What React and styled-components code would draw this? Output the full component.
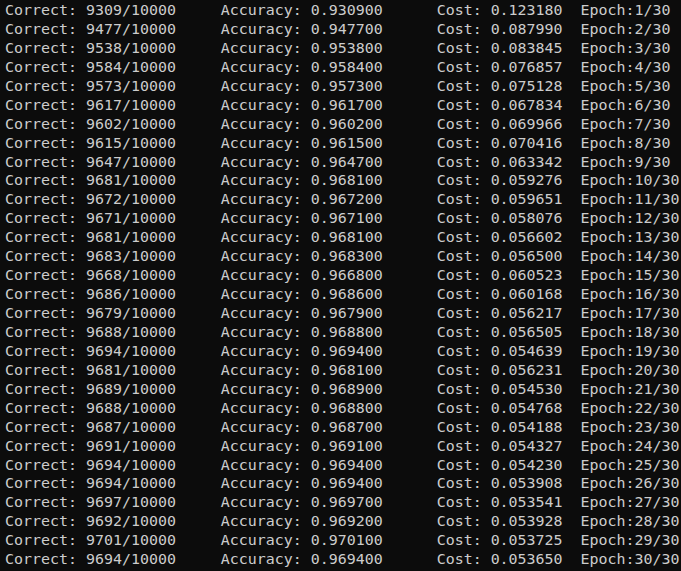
import styled, { createGlobalStyle } from "styled-components";

const GlobalStyle = createGlobalStyle`
  html, body {
    margin: 0;
    padding: 0;
    background: #0c0c0c;
  }
`;

// epoch results: correct out of 10000, cost
const rows = [
  [9309, "0.123180"], [9477, "0.087990"], [9538, "0.083845"],
  [9584, "0.076857"], [9573, "0.075128"], [9617, "0.067834"],
  [9602, "0.069966"], [9615, "0.070416"], [9647, "0.063342"],
  [9681, "0.059276"], [9672, "0.059651"], [9671, "0.058076"],
  [9681, "0.056602"], [9683, "0.056500"], [9668, "0.060523"],
  [9686, "0.060168"], [9679, "0.056217"], [9688, "0.056505"],
  [9694, "0.054639"], [9681, "0.056231"], [9689, "0.054530"],
  [9688, "0.054768"], [9687, "0.054188"], [9691, "0.054327"],
  [9694, "0.054230"], [9694, "0.053908"], [9697, "0.053541"],
  [9692, "0.053928"], [9701, "0.053725"], [9694, "0.053650"],
];

const App = () => {
  return (
    <>
      <GlobalStyle />
      <Terminal>
        {rows.map(([correct, cost], i) => (
          <Line key={i}>
            <Field $w={24}>Correct: {correct}/10000</Field>
            <Field $w={24}>Accuracy: {(correct / 10000).toFixed(6)}</Field>
            <Field $w={16}>Cost: {cost}</Field>
            <Field>Epoch:{i + 1}/30</Field>
          </Line>
        ))}
      </Terminal>
    </>
  );
};

const Terminal = styled.div`
  display: flex;
  flex-direction: column;
  width: 681px;
  height: 571px;
  box-sizing: border-box;
  padding: 1px 0 0 5px;
  background: #0c0c0c;
  color: #cccccc;
  font-family: "DejaVu Sans Mono", "Liberation Mono", monospace;
  font-size: 14.95px;
  line-height: 18.93px;
  overflow: hidden;
`;

const Line = styled.div`
  display: flex;
  white-space: pre;
`;

const Field = styled.span`
  flex: none;
  width: ${(p) => (p.$w ? `${p.$w}ch` : "auto")};
`;

export default App;
